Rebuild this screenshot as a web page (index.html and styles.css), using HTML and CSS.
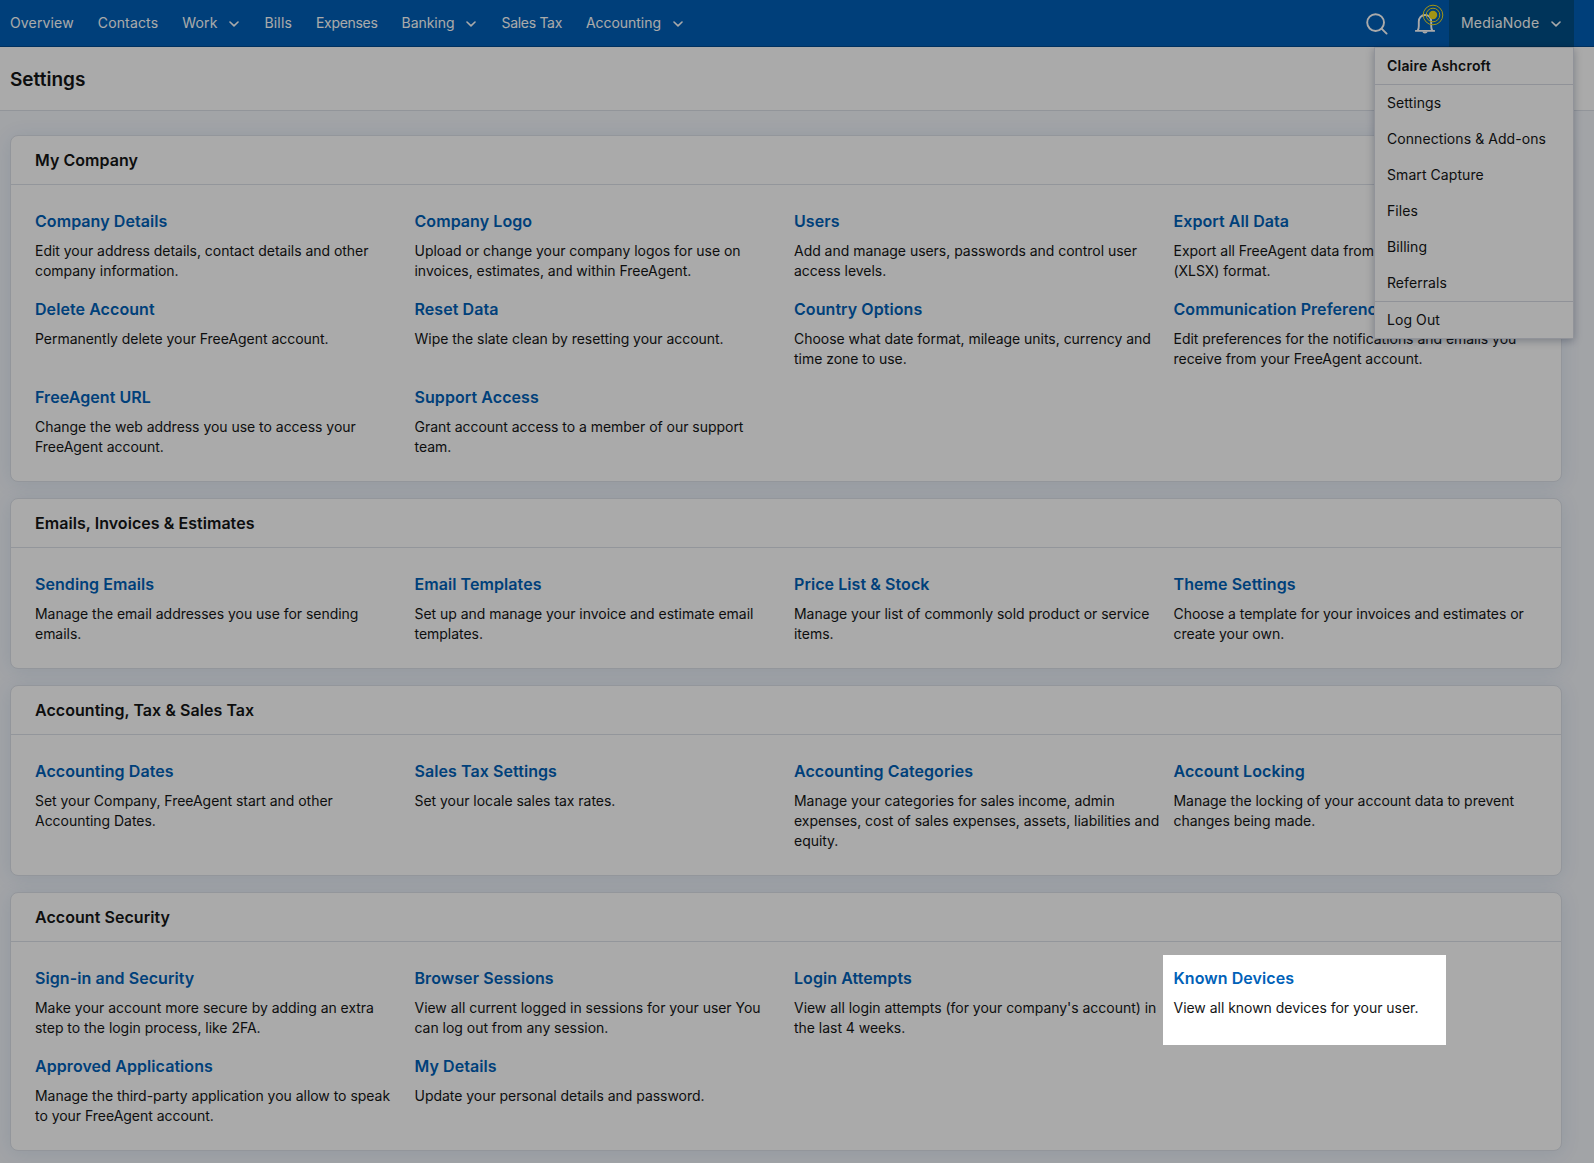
FILE: index.html
```html
<!doctype html>
<html lang="en">
<head>
  <meta charset="utf-8">
  <title>Settings</title>
  <link rel="stylesheet" href="styles.css">
</head>
<body>
<div class="navbar">
  <ul class="nav">
    <li>Overview</li>
    <li>Contacts</li>
    <li>Work <svg class="chevron" viewBox="0 0 10 6"><path d="M1 1l4 3.8L9 1"/></svg></li>
    <li>Bills</li>
    <li class="nav_tight">Expenses</li>
    <li class="nav_plain">Banking <svg class="chevron" viewBox="0 0 10 6"><path d="M1 1l4 3.8L9 1"/></svg></li>
    <li class="nav_tight">Sales Tax</li>
    <li class="nav_plain">Accounting <svg class="chevron" viewBox="0 0 10 6"><path d="M1 1l4 3.8L9 1"/></svg></li>
  </ul>
  <div class="tools">
    <svg class="icon-search" viewBox="0 0 22 22"><circle cx="9.6" cy="9.6" r="8.4"/><path d="M15.8 15.8l4.8 4.8"/></svg>
    <div class="bell">
      <svg class="icon-bell" viewBox="0 0 20 22">
        <path d="M.8 18.9h18.4M2.7 18.6c.9-1.3 1.1-2.6 1.1-4.6V9.6C3.8 5.7 6.4 3 10 3s6.2 2.7 6.2 6.6V14c0 2 .2 3.3 1.1 4.6"/>
        <path class="solid" d="M7.3 19.5h5.4c-.3 1.3-1.3 2-2.7 2s-2.400-.7-2.700-2z"/>
      </svg>
      <svg class="icon-pulse" viewBox="0 0 22 22"><circle cx="11" cy="11" r="9.8"/><circle cx="11" cy="11" r="6.8"/><circle class="solid" cx="11" cy="11" r="4.2"/></svg>
    </div>
    <div class="account">
      <span>MediaNode</span> <svg class="chevron" viewBox="0 0 10 6"><path d="M1 1l4 3.8L9 1"/></svg>
      <ul class="menu">
        <li class="menu_user">Claire Ashcroft</li>
        <li>Settings</li>
        <li>Connections &amp; Add-ons</li>
        <li>Smart Capture</li>
        <li>Files</li>
        <li>Billing</li>
        <li>Referrals</li>
        <li class="menu_logout">Log Out</li>
      </ul>
    </div>
  </div>
</div>

<div class="header">
  <h1>Settings</h1>
</div>

<div class="content">
  <div class="card">
    <h2>My Company</h2>
    <ul class="links">
      <li>
        <a>Company Details</a>
        <p>Edit your address details, contact details and other<br>company information.</p>
      </li>
      <li>
        <a>Company Logo</a>
        <p>Upload or change your company logos for use on<br>invoices, estimates, and within FreeAgent.</p>
      </li>
      <li>
        <a>Users</a>
        <p>Add and manage users, passwords and control user<br>access levels.</p>
      </li>
      <li>
        <a>Export All Data</a>
        <p>Export all FreeAgent data from<br>(XLSX) format.</p>
      </li>
      <li>
        <a>Delete Account</a>
        <p>Permanently delete your FreeAgent account.</p>
      </li>
      <li>
        <a>Reset Data</a>
        <p>Wipe the slate clean by resetting your account.</p>
      </li>
      <li>
        <a>Country Options</a>
        <p>Choose what date format, mileage units, currency and<br>time zone to use.</p>
      </li>
      <li>
        <a>Communication Preferences</a>
        <p>Edit preferences for the notifications and emails you<br>receive from your FreeAgent account.</p>
      </li>
      <li>
        <a>FreeAgent URL</a>
        <p>Change the web address you use to access your<br>FreeAgent account.</p>
      </li>
      <li>
        <a>Support Access</a>
        <p>Grant account access to a member of our support<br>team.</p>
      </li>
    </ul>
  </div>

  <div class="card">
    <h2>Emails, Invoices &amp; Estimates</h2>
    <ul class="links">
      <li>
        <a>Sending Emails</a>
        <p>Manage the email addresses you use for sending<br>emails.</p>
      </li>
      <li>
        <a>Email Templates</a>
        <p>Set up and manage your invoice and estimate email<br>templates.</p>
      </li>
      <li>
        <a>Price List &amp; Stock</a>
        <p>Manage your list of commonly sold product or service<br>items.</p>
      </li>
      <li>
        <a>Theme Settings</a>
        <p>Choose a template for your invoices and estimates or<br>create your own.</p>
      </li>
    </ul>
  </div>

  <div class="card">
    <h2>Accounting, Tax &amp; Sales Tax</h2>
    <ul class="links">
      <li>
        <a>Accounting Dates</a>
        <p>Set your Company, FreeAgent start and other<br>Accounting Dates.</p>
      </li>
      <li>
        <a>Sales Tax Settings</a>
        <p>Set your locale sales tax rates.</p>
      </li>
      <li>
        <a>Accounting Categories</a>
        <p>Manage your categories for sales income, admin<br>expenses, cost of sales expenses, assets, liabilities and<br>equity.</p>
      </li>
      <li>
        <a>Account Locking</a>
        <p>Manage the locking of your account data to prevent<br>changes being made.</p>
      </li>
    </ul>
  </div>

  <div class="card">
    <h2>Account Security</h2>
    <ul class="links">
      <li>
        <a>Sign-in and Security</a>
        <p>Make your account more secure by adding an extra<br>step to the login process, like 2FA.</p>
      </li>
      <li>
        <a>Browser Sessions</a>
        <p>View all current logged in sessions for your user You<br>can log out from any session.</p>
      </li>
      <li>
        <a>Login Attempts</a>
        <p>View all login attempts (for your company's account) in<br>the last 4 weeks.</p>
      </li>
      <li class="spotlight">
        <a>Known Devices</a>
        <p>View all known devices for your user.</p>
      </li>
      <li>
        <a>Approved Applications</a>
        <p>Manage the third-party application you allow to speak<br>to your FreeAgent account.</p>
      </li>
      <li>
        <a>My Details</a>
        <p>Update your personal details and password.</p>
      </li>
    </ul>
  </div>
</div>
</body>
</html>
```
FILE: styles.css
```css
* {
  box-sizing: border-box;
}
body {
  margin: 0;
  height: 100vh;
  overflow: hidden;
  background: #f3f6fb;
  color: #141516;
  font: 14px/20px Inter, "Liberation Sans", sans-serif;
}
ul, h1, h2, p {
  list-style: none;
  margin: 0;
  padding: 0;
}

/* top bar */
.navbar {
  display: flex;
  justify-content: space-between;
  height: 47px;
  padding: 0 20px 0 10px;
  background: #005fb8;
  border-bottom: 1px solid #004a91;
  color: #fff;
}
.nav {
  display: flex;
  align-items: center;
  gap: 24px;
}
.nav li {
  display: flex;
  align-items: center;
  letter-spacing: .15px;
}
.nav .nav_plain {
  letter-spacing: -.05px;
}
.nav .nav_tight {
  letter-spacing: -.3px;
}
.chevron {
  width: 10px;
  height: 6px;
  margin: 2px 1px 0 12px;
  fill: none;
  stroke: currentColor;
  stroke-width: 1.6;
  stroke-linecap: round;
  stroke-linejoin: round;
}
.tools {
  display: flex;
  align-items: center;
}
.icon-search, .icon-bell {
  display: block;
  width: 22px;
  height: 22px;
  fill: none;
  stroke: #fff;
  stroke-width: 1.9;
  stroke-linecap: round;
}
.icon-search {
  margin: 1px 27px 0 0;
}
.bell {
  position: relative;
  margin-right: 14px;
}
.icon-bell {
  width: 20px;
}
.icon-bell .solid {
  fill: #fff;
  stroke: none;
}
.icon-pulse {
  position: absolute;
  top: -8px;
  left: 7px;
  width: 22px;
  height: 22px;
  fill: none;
  stroke: #f5df1e;
  stroke-width: 1;
}
.icon-pulse .solid {
  fill: #f5df1e;
  stroke: none;
}
.account {
  position: relative;
  display: flex;
  align-items: center;
  height: 47px;
  width: 125px;
  padding-left: 12px;
  background: #004f87;
  border-bottom: 1px solid #004170;
}
.account span {
  letter-spacing: .22px;
}
.menu {
  position: absolute;
  z-index: 10;
  top: 47px;
  right: 0;
  width: 200px;
  background: #fff;
  border: 1px solid #dadde6;
  border-top-color: #e4e7ec;
  box-shadow: 0 2px 8px rgba(0, 20, 60, .28);
  color: #141516;
}
.menu li {
  height: 36px;
  padding-left: 12px;
  letter-spacing: .07px;
  line-height: 36px;
}
.menu .menu_user {
  height: 37px;
  border-bottom: 1px solid #d9dce4;
  font-weight: 600;
  letter-spacing: .2px;
}
.menu .menu_logout {
  height: 37px;
  border-top: 1px solid #d9dce4;
}

/* page header */
.header {
  height: 64px;
  padding: 21px 10px;
  background: #fff;
  border-bottom: 1px solid #dbe0e8;
}
h1 {
  font-size: 19px;
  font-weight: 600;
  line-height: 24px;
}

/* settings cards */
.content {
  display: flex;
  flex-direction: column;
  gap: 16px;
  padding: 24px 32px 12px 10px;
}
.card {
  background: #fff;
  border: 1px solid #dde1e9;
  border-radius: 8px;
  box-shadow: 0 2px 20px rgba(20, 80, 150, .1);
}
h2 {
  height: 49px;
  padding-left: 24px;
  border-bottom: 1px solid #dde1e9;
  font-size: 16px;
  font-weight: 600;
  letter-spacing: .05px;
  line-height: 48px;
}
.links {
  display: grid;
  grid-template-columns: repeat(4, 1fr);
  gap: 16px;
  padding: 24px;
}
.links li {
  min-height: 72px;
  min-width: 0;
  white-space: nowrap;
}
.links a {
  display: block;
  margin-bottom: 8px;
  color: #0061b8;
  font-size: 16px;
  font-weight: 600;
  letter-spacing: .07px;
  line-height: 24px;
}
.links p {
  letter-spacing: -.03px;
}

/* dims everything but the highlighted link */
.spotlight {
  position: relative;
}
.spotlight:after {
  content: "";
  position: absolute;
  z-index: 20;
  top: -11px;
  left: -11px;
  width: 283px;
  height: 90px;
  box-shadow: 0 0 0 2000px rgba(0, 0, 0, .333);
  pointer-events: none;
}
```
